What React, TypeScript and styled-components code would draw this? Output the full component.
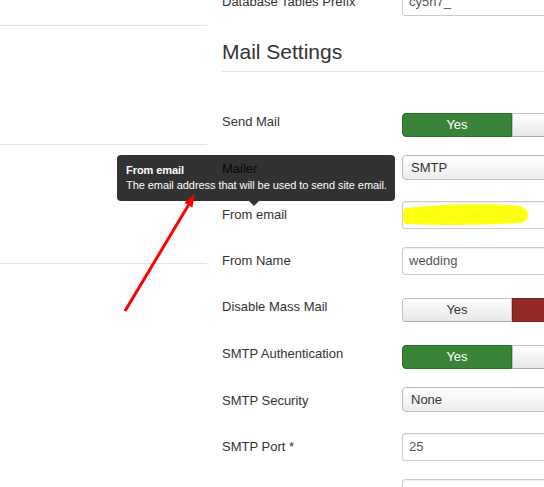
import styled, { createGlobalStyle } from "styled-components";

const GlobalStyle = createGlobalStyle`
  html, body {
    margin: 0;
    padding: 0;
    background: #fff;
  }
  body {
    width: 544px;
    height: 487px;
    overflow: hidden;
    font-family: "Liberation Sans", Arial, sans-serif;
    font-size: 13px;
    color: #333;
  }
`;

type Field =
  | { label: string; kind: "input"; value: string; muted?: boolean }
  | { label: string; kind: "select"; value: string }
  | { label: string; kind: "toggle"; on: boolean };

const fields: Field[] = [
  { label: "Send Mail", kind: "toggle", on: true },
  { label: "Mailer", kind: "select", value: "SMTP" },
  { label: "From email", kind: "input", value: "info@wedding.com", muted: true },
  { label: "From Name", kind: "input", value: "wedding" },
  { label: "Disable Mass Mail", kind: "toggle", on: false },
  { label: "SMTP Authentication", kind: "toggle", on: true },
  { label: "SMTP Security", kind: "select", value: "None" },
  { label: "SMTP Port *", kind: "input", value: "25" },
  { label: "", kind: "input", value: "" },
];

export default function App() {
  return (
    <Page>
      <GlobalStyle />
      <Sidebar>
        <SideItem />
        <SideItem />
        <SideItem />
      </Sidebar>
      <Main>
        <ControlGroup>
          <Label>Database Tables Prefix</Label>
          <TextInput>cy5h7_</TextInput>
        </ControlGroup>
        <Legend>Mail Settings</Legend>
        {fields.map((f, i) => (
          <ControlGroup key={i}>
            <Label>{f.label}</Label>
            {f.kind === "input" && <TextInput $muted={f.muted}>{f.value}</TextInput>}
            {f.kind === "select" && <Select>{f.value}</Select>}
            {f.kind === "toggle" && (
              <Toggle>
                <ToggleButton $variant={f.on ? "success" : "plain"} $first>
                  Yes
                </ToggleButton>
                <ToggleButton $variant={f.on ? "plain" : "danger"}>No</ToggleButton>
              </Toggle>
            )}
          </ControlGroup>
        ))}
      </Main>

      <Tooltip>
        <TipInner>
          <strong>From email</strong>
          <br />
          The email address that will be used to send site email.
        </TipInner>
        <TipArrow />
      </Tooltip>

      <Markup viewBox="0 0 544 487" width="544" height="487">
        <path
          d="M405 208 C 440 204, 495 203, 519 206 C 531 208, 531 222, 519 223 C 480 226, 432 225, 405 224 C 402 220, 402 212, 405 208 Z"
          fill="#ffff00"
          opacity="0.93"
        />
        <line x1="125" y1="311" x2="188.5" y2="205" stroke="#ff0000" strokeWidth="3" />
        <polygon points="195,194 192.4,207.6 184.4,202.8" fill="#ff0000" />
      </Markup>
    </Page>
  );
}

const Page = styled.div`
  position: relative;
  display: flex;
  width: 544px;
  height: 487px;
  overflow: hidden;
`;

const Sidebar = styled.div`
  flex: none;
  width: 207px;
  margin-top: -93px;
`;

const SideItem = styled.div`
  height: 118px;
  border-bottom: 1px solid #e3e3e3;
`;

const Main = styled.div`
  flex: 1;
  min-width: 0;
  padding-left: 15px;
  margin-top: -12px;
`;

const ControlGroup = styled.div`
  display: flex;
  align-items: flex-start;
  min-height: 28px;
  margin-bottom: 18px;
`;

const Label = styled.div`
  flex: none;
  width: 180px;
  padding-top: 5px;
  line-height: 18px;
  font-size: 13px;
  color: #333;
  white-space: nowrap;
`;

const Legend = styled.div`
  margin: -3px 0 36px;
  padding-top: 2px;
  font-size: 21px;
  line-height: 38px;
  color: #333;
  border-bottom: 1px solid #e5e5e5;
  width: 400px;
`;

const TextInput = styled.div<{ $muted?: boolean }>`
  flex: none;
  box-sizing: border-box;
  width: 220px;
  height: 28px;
  padding: 4px 6px;
  line-height: 18px;
  font-size: 13px;
  color: ${(p) => (p.$muted ? "#b8b8b8" : "#555")};
  border: 1px solid #ccc;
  border-radius: 3px;
  box-shadow: inset 0 1px 1px rgba(0, 0, 0, 0.06);
  background: #fff;
`;

const Select = styled.div`
  flex: none;
  box-sizing: border-box;
  width: 220px;
  height: 25px;
  padding: 3px 8px;
  line-height: 17px;
  font-size: 13px;
  color: #333;
  border: 1px solid #bbb;
  border-radius: 4px;
  background: linear-gradient(#ffffff, #ececec);
  box-shadow: inset 0 1px 0 rgba(255, 255, 255, 0.6);
`;

const Toggle = styled.div`
  flex: none;
  display: flex;
  margin-top: 5px;
`;

const ToggleButton = styled.div<{ $variant: "success" | "danger" | "plain"; $first?: boolean }>`
  box-sizing: border-box;
  width: 110px;
  height: 24px;
  line-height: 22px;
  text-align: center;
  font-size: 13px;
  border: 1px solid;
  border-radius: ${(p) => (p.$first ? "4px 0 0 4px" : "0")};
  ${(p) =>
    p.$variant === "success"
      ? `background: #3a843a; border-color: #2f6d2f; color: #fff;`
      : p.$variant === "danger"
      ? `background: #942a25; border-color: #7a221e; color: #fff;`
      : `background: linear-gradient(#ffffff, #e8e8e8); border-color: #c2c2c2 #c2c2c2 #a8a8a8; color: #333;`}
`;

const Tooltip = styled.div`
  position: absolute;
  left: 117px;
  top: 155px;
  opacity: 0.8;
`;

const TipInner = styled.div`
  padding: 8px 8px 8px 9px;
  background: #000;
  color: #fff;
  border-radius: 4px;
  font-size: 11px;
  line-height: 15px;
  letter-spacing: -0.06px;
  white-space: nowrap;
`;

const TipArrow = styled.div`
  position: absolute;
  left: 132px;
  bottom: -5px;
  width: 0;
  height: 0;
  border-left: 5px solid transparent;
  border-right: 5px solid transparent;
  border-top: 5px solid #000;
`;

const Markup = styled.svg`
  position: absolute;
  left: 0;
  top: 0;
  pointer-events: none;
`;
